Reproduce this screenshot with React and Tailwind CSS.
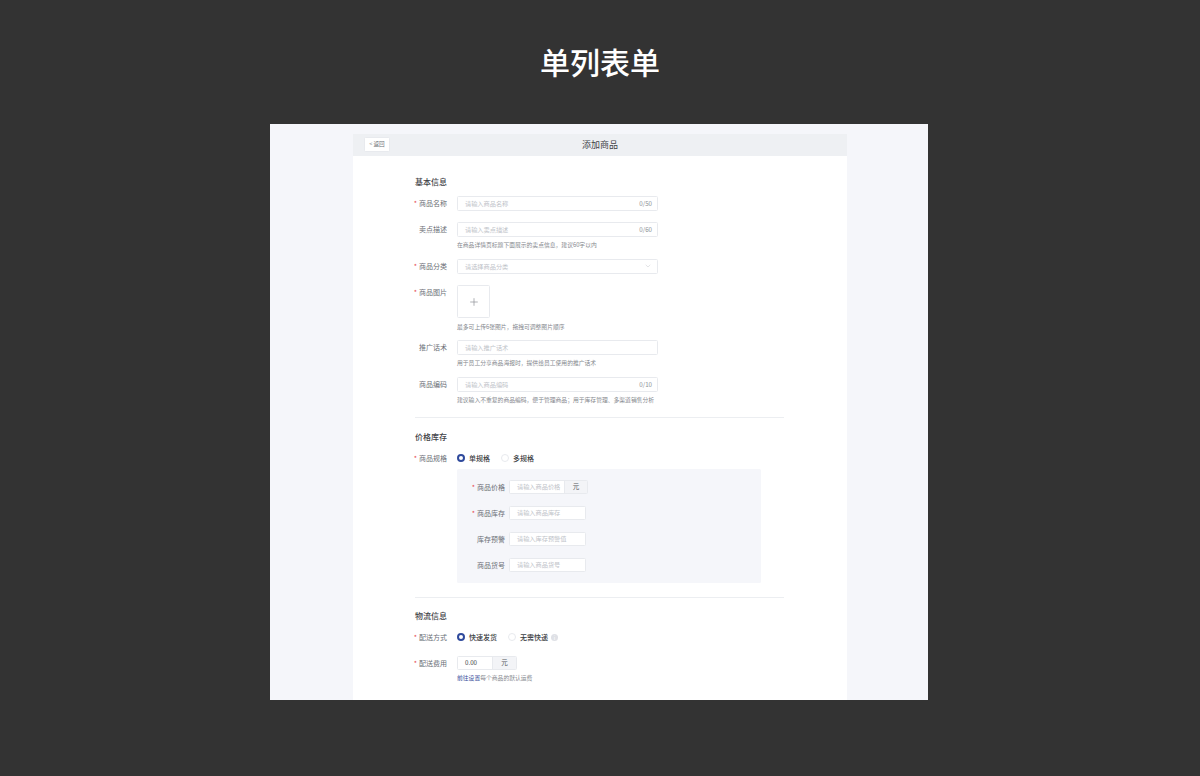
import React from "react";

const Label = ({ req, children, w = "w-[32px]" }) => (
  <div className={`${w} shrink-0 h-[14.5px] flex items-center justify-end whitespace-nowrap text-[7px] text-[#6b6f76]`}>
    {req && <span className="text-[#e5484d] mr-[2px]">*</span>}
    {children}
  </div>
);

const Input = ({ ph, count, w = "w-[201px]", chevron }) => (
  <div className={`${w} h-[14.5px] bg-white border border-[#e8eaee] rounded-[1.5px] flex items-center justify-between pl-[7px] pr-[5px] text-[6.2px] text-[#c0c3c9] whitespace-nowrap`}>
    <span>{ph}</span>
    {count && <span className="text-[#8d9096]">{count}</span>}
    {chevron && (
      <svg width="6" height="4" viewBox="0 0 6 4" fill="none" className="mr-[1px]">
        <path d="M0.7 0.8 L3 3 L5.3 0.8" stroke="#c6c9ce" strokeWidth="0.5" />
      </svg>
    )}
  </div>
);

const Help = ({ children, className = "mt-[3.5px]" }) => (
  <div className={`${className} h-[9px] leading-[9px] text-[5.8px] text-[#85888e] whitespace-nowrap`}>{children}</div>
);

const Row = ({ label, req, className = "", children }) => (
  <div className={`flex gap-[10px] ${className}`}>
    <Label req={req}>{label}</Label>
    <div className="flex-1 min-w-0">{children}</div>
  </div>
);

const Radio = ({ on, children }) => (
  <div className="flex items-center text-[7px] text-[#3a3d42] font-medium whitespace-nowrap">
    <span className={on ? "w-[8px] h-[8px] rounded-full border-[2.2px] border-[#2f4a9c] bg-white mr-[4px]" : "w-[8px] h-[8px] rounded-full border border-[#e8eaee] bg-white mr-[4px]"} />
    {children}
  </div>
);

const SectionTitle = ({ children, className }) => (
  <div className={`${className} h-[12px] leading-[12px] text-[8px] font-medium text-[#3f4247]`}>{children}</div>
);

const Addon = ({ ph, value, inputW, addonW }) => (
  <div className="flex h-[14.5px] border border-[#e8eaee] rounded-[1.5px] overflow-hidden whitespace-nowrap">
    <div className={`${inputW} bg-white flex items-center text-[6.2px] pl-[7px] ${value ? "text-[#3a3d42]" : "text-[#c0c3c9]"}`}>{value || ph}</div>
    <div className={`${addonW} bg-[#f3f4f7] border-l border-[#e8eaee] flex items-center justify-center text-[6.5px] text-[#55585e]`}>元</div>
  </div>
);

const SubRow = ({ label, req, className = "", children }) => (
  <div className={`flex gap-[4px] ${className}`}>
    <Label req={req} w="w-[34px]">{label}</Label>
    {children}
  </div>
);

export default function App() {
  return (
    <div className="w-[1200px] h-[776px] bg-[#333333] overflow-hidden" style={{ fontFamily: '"Noto Sans CJK SC", "Noto Sans", sans-serif' }}>
      <h1 className="pt-[39px] h-[124px] text-center text-[30px] leading-[44px] font-medium text-white">单列表单</h1>
      <div className="ml-[270px] w-[657.5px] h-[576px] bg-[#f5f6fa] pt-[10px] overflow-hidden">
        <div className="ml-[83px] w-[494px] h-[566px] bg-white">
          <div className="relative h-[21.5px] bg-[#eef0f3] flex items-center justify-center text-[9px] text-[#3f4247]">
            添加商品
            <div className="absolute left-[11px] top-[3px] w-[26px] h-[15px] bg-white border border-[#e8eaee] rounded-[1.5px] flex items-center justify-center gap-[1px] text-[5.6px] text-[#6b6f76]">
              <span className="text-[#9a9da3]">&lt;</span>返回
            </div>
          </div>
          <div className="pl-[62px] pr-[63px]">
            <SectionTitle className="mt-[20px]">基本信息</SectionTitle>
            <Row req label="商品名称" className="mt-[8.5px]"><Input ph="请输入商品名称" count="0/50" /></Row>
            <Row label="卖点描述" className="mt-[11.5px]">
              <Input ph="请输入卖点描述" count="0/60" />
              <Help>在商品详情页标题下面展示的卖点信息，建议60字以内</Help>
            </Row>
            <Row req label="商品分类" className="mt-[10px]"><Input ph="请选择商品分类" chevron /></Row>
            <Row req label="商品图片" className="mt-[11.5px]">
              <div className="w-[33px] h-[33px] bg-white border border-[#e8eaee] rounded-[1.5px] flex items-center justify-center">
                <svg width="8" height="8" viewBox="0 0 8 8"><path d="M4 0.2V7.8M0.2 4H7.8" stroke="#8d9096" strokeWidth="0.7" /></svg>
              </div>
              <Help className="mt-[4px]">最多可上传6张图片，拖拽可调整图片顺序</Help>
            </Row>
            <Row label="推广话术" className="mt-[9px]">
              <Input ph="请输入推广话术" />
              <Help>用于员工分享商品海报时，提供给员工使用的推广话术</Help>
            </Row>
            <Row label="商品编码" className="mt-[10px]">
              <Input ph="请输入商品编码" count="0/10" />
              <Help>建议输入不重复的商品编码，便于管理商品；用于库存管理、多渠道销售分析</Help>
            </Row>
            <div className="mt-[13px] h-px bg-[#eceef1]" />
            <SectionTitle className="mt-[13px]">价格库存</SectionTitle>
            <Row req label="商品规格" className="mt-[8px]">
              <div className="h-[14.5px] flex items-center gap-[11px]">
                <Radio on>单规格</Radio>
                <Radio>多规格</Radio>
              </div>
            </Row>
            <div className="ml-[42px] mt-[3px] w-[304px] h-[114.5px] bg-[#f5f6fa] rounded-[1.5px] pt-[11px] pl-[14px]">
              <SubRow req label="商品价格"><Addon ph="请输入商品价格" inputW="w-[54px]" addonW="w-[23px]" /></SubRow>
              <SubRow req label="商品库存" className="mt-[11.5px]"><Input ph="请输入商品库存" w="w-[77px]" /></SubRow>
              <SubRow label="库存预警" className="mt-[11.5px]"><Input ph="请输入库存预警值" w="w-[77px]" /></SubRow>
              <SubRow label="商品货号" className="mt-[11.5px]"><Input ph="请输入商品货号" w="w-[77px]" /></SubRow>
            </div>
            <div className="mt-[14px] h-px bg-[#eceef1]" />
            <SectionTitle className="mt-[12px]">物流信息</SectionTitle>
            <Row req label="配送方式" className="mt-[8px]">
              <div className="h-[14.5px] flex items-center gap-[11px]">
                <Radio on>快速发货</Radio>
                <div className="flex items-center gap-[3px]">
                  <Radio>无需快递</Radio>
                  <span className="w-[7px] h-[7px] rounded-full bg-[#dfe1e6] flex items-center justify-center text-[5px] leading-none text-white">i</span>
                </div>
              </div>
            </Row>
            <Row req label="配送费用" className="mt-[11px]">
              <div className="w-[60px]"><Addon value="0.00" inputW="w-[35px]" addonW="w-[25px]" /></div>
              <Help className="mt-[2.5px]"><span className="text-[#3a4f9c]">前往设置</span>每个商品的默认运费</Help>
            </Row>
          </div>
        </div>
      </div>
    </div>
  );
}
